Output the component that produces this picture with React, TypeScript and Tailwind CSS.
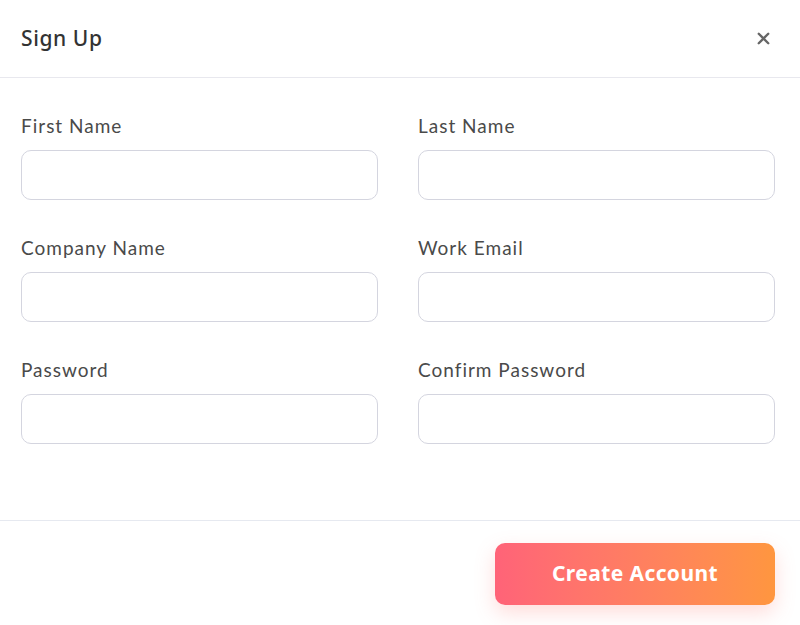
import { X } from 'lucide-react';

const fields = [
  'First Name',
  'Last Name',
  'Company Name',
  'Work Email',
  'Password',
  'Confirm Password',
];

export default function App() {
  return (
    <div className="w-[800px] h-[625px] bg-white overflow-hidden flex flex-col">
      {/* Header */}
      <div className="h-[78px] flex items-center justify-between pl-[21px] pr-[27px] border-b border-[#e8e8ee]">
        <h2 className="text-[21px] font-medium text-[#333] tracking-[0.6px]" style={{ fontFamily: '"Noto Sans", sans-serif' }}>
          Sign Up
        </h2>
        <button className="text-[#666]" aria-label="Close">
          <X className="w-[19px] h-[19px]" strokeWidth={3} />
        </button>
      </div>

      {/* Form */}
      <div className="pt-[36px] pl-[21px] pb-[76px]" style={{ fontFamily: 'Lato, sans-serif' }}>
        <div className="grid grid-cols-[357px_357px] gap-x-[40px] gap-y-[36px]">
          {fields.map((f) => (
            <div key={f} className="flex flex-col">
              <label className="text-[19px] leading-[24px] tracking-[1px] text-[#4a4a4a] mb-[12px]">{f}</label>
              <input
                type={f.includes('Password') ? 'password' : 'text'}
                className="h-[50px] rounded-[10px] border-[1.5px] border-[#d4d5df] bg-white px-3 outline-none"
              />
            </div>
          ))}
        </div>
      </div>

      {/* Footer */}
      <div className="border-t border-[#e6e9f0] flex justify-end pt-[22px] pr-[25px]">
        <button
          className="w-[280px] h-[62px] rounded-[10px] bg-gradient-to-r from-[#ff6378] to-[#ff963f] text-white text-[21px] font-bold tracking-[0.4px] shadow-[0_8px_20px_rgba(255,120,110,0.25)]"
          style={{ fontFamily: '"Noto Sans", sans-serif' }}
        >
          Create Account
        </button>
      </div>
    </div>
  );
}
